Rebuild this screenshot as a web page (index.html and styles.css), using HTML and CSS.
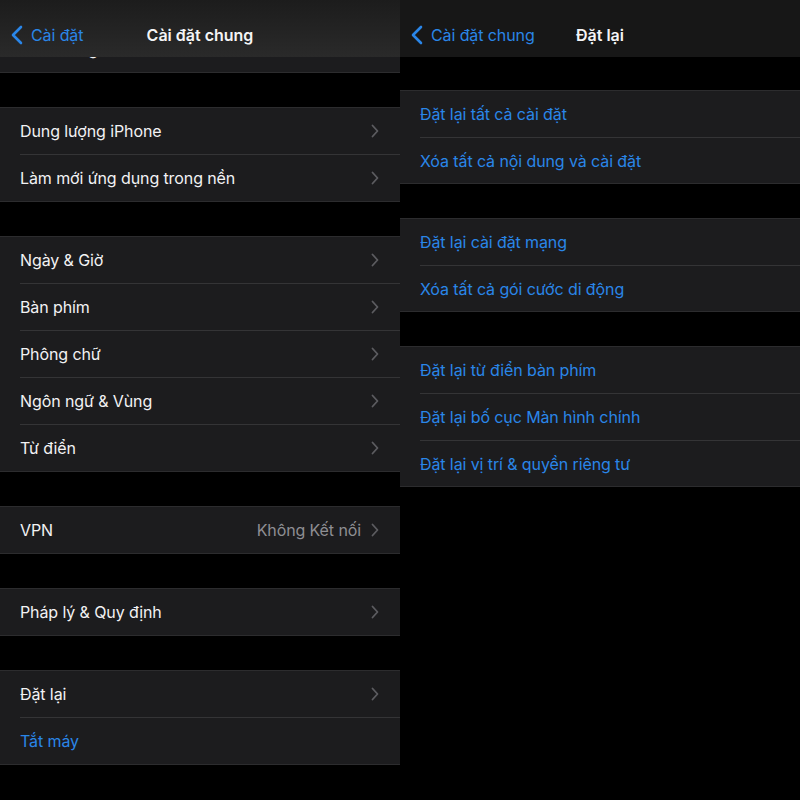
FILE: index.html
```html
<!DOCTYPE html>
<html lang="vi">
<head>
<meta charset="utf-8">
<title>Cài đặt</title>
<link rel="stylesheet" href="styles.css">
</head>
<body>
<div class="screen">
  <section class="panel">
    <header class="nav nav-left">
      <a class="back"><svg class="back-icon" viewBox="0 0 12 20"><path d="M10 2 L2 10 L10 18"/></svg><span>Cài đặt</span></a>
      <h1 class="title">Cài đặt chung</h1>
      <span></span>
    </header>
    <div class="peek">
      <div class="row"><div class="row-inner"><span class="label">Hình trong hình</span><svg class="chev" viewBox="0 0 8 14"><path d="M1.5 1.5 L6.5 7 L1.5 12.5"/></svg></div></div>
    </div>
    <div class="group">
      <div class="row"><div class="row-inner"><span class="label">Dung lượng iPhone</span><svg class="chev" viewBox="0 0 8 14"><path d="M1.5 1.5 L6.5 7 L1.5 12.5"/></svg></div></div>
      <div class="row"><div class="row-inner"><span class="label">Làm mới ứng dụng trong nền</span><svg class="chev" viewBox="0 0 8 14"><path d="M1.5 1.5 L6.5 7 L1.5 12.5"/></svg></div></div>
    </div>
    <div class="group">
      <div class="row"><div class="row-inner"><span class="label">Ngày &amp; Giờ</span><svg class="chev" viewBox="0 0 8 14"><path d="M1.5 1.5 L6.5 7 L1.5 12.5"/></svg></div></div>
      <div class="row"><div class="row-inner"><span class="label">Bàn phím</span><svg class="chev" viewBox="0 0 8 14"><path d="M1.5 1.5 L6.5 7 L1.5 12.5"/></svg></div></div>
      <div class="row"><div class="row-inner"><span class="label">Phông chữ</span><svg class="chev" viewBox="0 0 8 14"><path d="M1.5 1.5 L6.5 7 L1.5 12.5"/></svg></div></div>
      <div class="row"><div class="row-inner"><span class="label">Ngôn ngữ &amp; Vùng</span><svg class="chev" viewBox="0 0 8 14"><path d="M1.5 1.5 L6.5 7 L1.5 12.5"/></svg></div></div>
      <div class="row"><div class="row-inner"><span class="label">Từ điển</span><svg class="chev" viewBox="0 0 8 14"><path d="M1.5 1.5 L6.5 7 L1.5 12.5"/></svg></div></div>
    </div>
    <div class="group">
      <div class="row"><div class="row-inner"><span class="label">VPN</span><span class="value">Không Kết nối</span><svg class="chev" viewBox="0 0 8 14"><path d="M1.5 1.5 L6.5 7 L1.5 12.5"/></svg></div></div>
    </div>
    <div class="group">
      <div class="row"><div class="row-inner"><span class="label">Pháp lý &amp; Quy định</span><svg class="chev" viewBox="0 0 8 14"><path d="M1.5 1.5 L6.5 7 L1.5 12.5"/></svg></div></div>
    </div>
    <div class="group">
      <div class="row"><div class="row-inner"><span class="label">Đặt lại</span><svg class="chev" viewBox="0 0 8 14"><path d="M1.5 1.5 L6.5 7 L1.5 12.5"/></svg></div></div>
      <div class="row"><div class="row-inner"><span class="label link">Tắt máy</span></div></div>
    </div>
  </section>

  <section class="panel panel-right">
    <header class="nav nav-right">
      <a class="back"><svg class="back-icon" viewBox="0 0 12 20"><path d="M10 2 L2 10 L10 18"/></svg><span>Cài đặt chung</span></a>
      <h1 class="title">Đặt lại</h1>
      <span></span>
    </header>
    <div class="group group-first">
      <div class="row"><div class="row-inner"><span class="label link">Đặt lại tất cả cài đặt</span></div></div>
      <div class="row"><div class="row-inner"><span class="label link">Xóa tất cả nội dung và cài đặt</span></div></div>
    </div>
    <div class="group">
      <div class="row"><div class="row-inner"><span class="label link">Đặt lại cài đặt mạng</span></div></div>
      <div class="row"><div class="row-inner"><span class="label link">Xóa tất cả gói cước di động</span></div></div>
    </div>
    <div class="group">
      <div class="row"><div class="row-inner"><span class="label link">Đặt lại từ điển bàn phím</span></div></div>
      <div class="row"><div class="row-inner"><span class="label link">Đặt lại bố cục Màn hình chính</span></div></div>
      <div class="row"><div class="row-inner"><span class="label link">Đặt lại vị trí &amp; quyền riêng tư</span></div></div>
    </div>
  </section>
</div>
</body>
</html>
```

FILE: styles.css
```css
* { box-sizing: border-box; margin: 0; padding: 0; }

html, body {
  background: #000;
}

body {
  width: 800px;
  height: 800px;
  overflow: hidden;
  font-family: Inter, "Noto Sans", "Liberation Sans", sans-serif;
  font-size: 16px;
  color: #f2f2f4;
  -webkit-font-smoothing: antialiased;
}

.screen {
  display: grid;
  grid-template-columns: 400px 400px;
  height: 800px;
}

.panel {
  display: flex;
  flex-direction: column;
  background: #000;
  min-width: 0;
}

.nav {
  height: 57px;
  display: grid;
  grid-template-columns: 1fr auto 1fr;
  align-items: center;
  padding: 12px 12px 0 12px;
  flex: none;
  position: relative;
  z-index: 1;
}

.nav-left {
  background: linear-gradient(#1c1c1c, #2a2a2a);
}

.nav-right {
  background: #171717;
}

.back {
  display: flex;
  align-items: center;
  gap: 8px;
  color: #2a86e8;
  font-size: 16px;
  letter-spacing: -0.1px;
  white-space: nowrap;
}

.back-icon {
  width: 12px;
  height: 20px;
  fill: none;
  stroke: #2a86e8;
  stroke-width: 2.6;
  stroke-linecap: round;
  stroke-linejoin: round;
  margin-left: -1px;
}

.title {
  font-size: 16px;
  font-weight: 600;
  color: #f4f4f6;
  text-align: center;
  white-space: nowrap;
}

.peek {
  height: 16px;
  overflow: hidden;
  display: flex;
  flex-direction: column;
  justify-content: flex-end;
  background: #1c1c1e;
  border-bottom: 1px solid #2c2c2e;
  flex: none;
}

.peek .row-inner { border-bottom: none; }

.group {
  margin-top: 34px;
  background: #1c1c1e;
  border-top: 1px solid #2c2c2e;
  border-bottom: 1px solid #2c2c2e;
  flex: none;
}

.group-first {
  margin-top: 33px;
}

.row {
  padding-left: 20px;
  flex: none;
}

.row-inner {
  height: 47px;
  display: flex;
  align-items: center;
  padding-right: 21px;
  border-bottom: 1px solid #343436;
}

.row:last-child .row-inner {
  border-bottom: none;
  height: 46px;
}

.panel-right .row:last-child .row-inner {
  height: 45px;
}

.label {
  flex: 1;
  white-space: nowrap;
  letter-spacing: -0.1px;
}

.link {
  color: #2a86e8;
}

.value {
  color: #8e8e93;
  margin-right: 10px;
  letter-spacing: -0.1px;
}

.chev {
  width: 8px;
  height: 14px;
  fill: none;
  stroke: #5c5c60;
  stroke-width: 1.8;
  stroke-linecap: round;
  stroke-linejoin: round;
}
```
